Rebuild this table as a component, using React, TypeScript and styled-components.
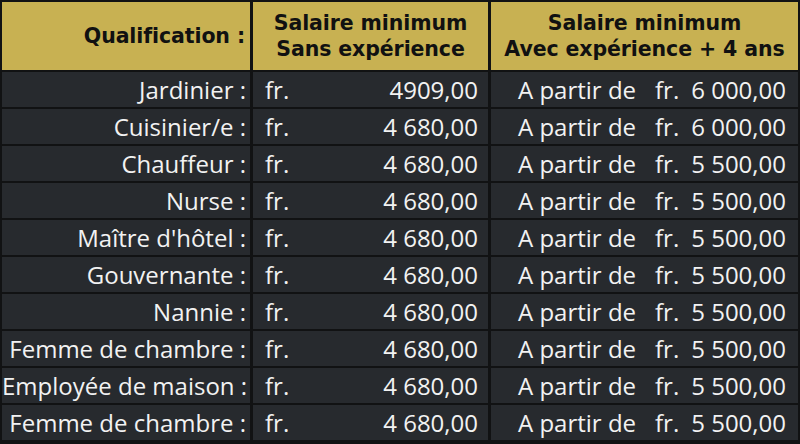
import React from "react";
import styled, { createGlobalStyle } from "styled-components";

const Global = createGlobalStyle`
  html, body { margin: 0; padding: 0; background: #111213; }
  body { width: 800px; height: 444px; overflow: hidden; }
`;

const Table = styled.div`
  display: grid;
  grid-template-columns: 248px 235px 1fr;
  grid-template-rows: 68px repeat(10, 35px);
  column-gap: 3px;
  row-gap: 2px;
  padding: 2px;
  width: 800px;
  height: 444px;
  box-sizing: border-box;
  background: #111213;
`;

const Head = styled.div<{ $align: "right" | "center" }>`
  background: #c8b152;
  color: #111;
  font-family: "DejaVu Sans", sans-serif;
  font-weight: 700;
  font-size: 20.5px;
  line-height: 26px;
  display: flex;
  flex-direction: column;
  justify-content: center;
  align-items: ${(p) => (p.$align === "right" ? "flex-end" : "center")};
  text-align: ${(p) => p.$align};
  padding: 0 ${(p) => (p.$align === "right" ? "5px" : "0")} 0 0;
  letter-spacing: -0.1px;
  white-space: nowrap;
`;

const Cell = styled.div`
  background: #272a2e;
  color: #f2f2f2;
  font-family: "Open Sans", sans-serif;
  font-size: 24px;
  line-height: 35px;
  white-space: nowrap;
`;

const NameCell = styled(Cell)`
  text-align: right;
  padding-right: 4px;
`;

const PriceCell = styled(Cell)`
  display: flex;
  justify-content: space-between;
  padding: 0 10px 0 12px;
`;

const FromCell = styled(Cell)`
  display: grid;
  grid-template-columns: 137px auto 1fr;
  padding: 0 12px 0 27px;
`;

const Amount = styled.span`
  text-align: right;
`;

const rows: [string, string, string][] = [
  ["Jardinier :", "4909,00", "6 000,00"],
  ["Cuisinier/e :", "4 680,00", "6 000,00"],
  ["Chauffeur :", "4 680,00", "5 500,00"],
  ["Nurse :", "4 680,00", "5 500,00"],
  ["Maître d'hôtel :", "4 680,00", "5 500,00"],
  ["Gouvernante :", "4 680,00", "5 500,00"],
  ["Nannie :", "4 680,00", "5 500,00"],
  ["Femme de chambre :", "4 680,00", "5 500,00"],
  ["Employée de maison :", "4 680,00", "5 500,00"],
  ["Femme de chambre :", "4 680,00", "5 500,00"],
];

export default function App() {
  return (
    <>
      <Global />
      <Table>
        <Head $align="right">Qualification :</Head>
        <Head $align="center">
          <span>Salaire minimum</span>
          <span>Sans expérience</span>
        </Head>
        <Head $align="center">
          <span>Salaire minimum</span>
          <span>Avec expérience + 4 ans</span>
        </Head>
        {rows.map(([name, min, max], i) => (
          <React.Fragment key={i}>
            <NameCell>{name}</NameCell>
            <PriceCell>
              <span>fr.</span>
              <span>{min}</span>
            </PriceCell>
            <FromCell>
              <span>A partir de</span>
              <span>fr.</span>
              <Amount>{max}</Amount>
            </FromCell>
          </React.Fragment>
        ))}
      </Table>
    </>
  );
}
